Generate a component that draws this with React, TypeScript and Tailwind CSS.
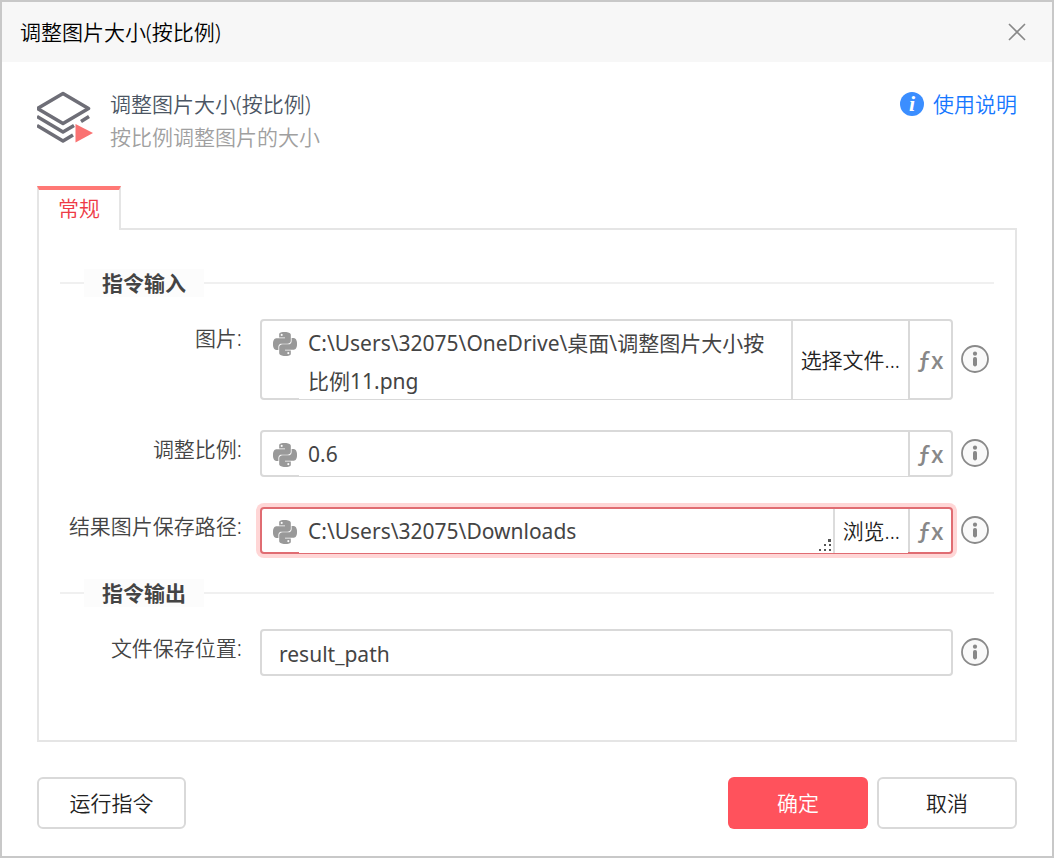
import React from "react";
import { SiPython } from "react-icons/si";

const inputFont = "text-[21px] leading-[38px] font-normal text-[#444]";

function LayersIcon() {
  return (
    <svg className="h-14 w-15 shrink-0" viewBox="0 0 60 56" fill="none" aria-hidden="true">
      <g stroke="#6e6e77" strokeWidth="3.6" strokeLinejoin="round">
        <path d="M26 5.5 L51.5 20.5 L26 35.5 L0.5 20.5 Z" />
        <path d="M0 28.5 L26 44 L37 37.5 M44 33.5 L52 28.5" />
        <path d="M0 37.5 L26 53 L36 47" />
      </g>
      <path d="M38.5 36 L56 45 L38.5 54.5 Z" fill="#fa7272" />
    </svg>
  );
}

function InfoIcon() {
  return (
    <svg className="h-7 w-7" viewBox="0 0 28 28" aria-hidden="true">
      <circle cx="14" cy="14" r="13" fill="#f9f9f9" stroke="#8a8a8a" strokeWidth="1.8" />
      <circle cx="14" cy="8.7" r="2.1" fill="#888" />
      <rect x="12" y="12" width="4" height="9.4" rx="1.8" fill="#888" />
    </svg>
  );
}

function ResizeGrip() {
  return (
    <svg className="absolute right-0.5 bottom-px h-3.5 w-3" viewBox="0 0 12 14" fill="#555" aria-hidden="true">
      <path d="M9 1h3v3H9zM5 6h2v2H5zM10 6h2v2h-2zM0 11h2v2H0zM5 11h2v2H5zM10 11h2v2h-2z" />
    </svg>
  );
}

function Legend({ children }: { children: React.ReactNode }) {
  return (
    <div className="flex h-7 items-center">
      <span className="h-0.5 w-6 bg-[#f0f0f0]" />
      <h2 className="bg-[#fcfcfc] px-[18px] text-[21px] leading-7 font-bold text-[#444]">{children}</h2>
      <span className="h-0.5 flex-1 bg-[#f0f0f0]" />
    </div>
  );
}

function Row({ id, label, children }: { id: string; label: string; children: React.ReactNode }) {
  return (
    <div className="flex items-start">
      <label htmlFor={id} className="w-[182px] shrink-0 text-right leading-[38px] text-[#444]">
        {label}
      </label>
      <div className="ml-[18px] flex min-w-0 flex-1 items-center gap-2">
        {children}
        <button type="button" aria-label={label + "说明"} className="h-[30px] shrink-0 pb-0.5">
          <InfoIcon />
        </button>
      </div>
    </div>
  );
}

type FieldProps = {
  id: string;
  value: string;
  rows?: number;
  action?: string;
  active?: boolean;
};

function ExpressionField({ id, value, rows = 1, action, active }: FieldProps) {
  return (
    <div
      className={
        "flex min-w-0 flex-1 rounded border-2 bg-white " +
        (active ? "border-[#e06c72] ring-4 ring-[#ffd6d6]" : "border-[#d9d9d9]")
      }
    >
      <span className="w-[37px] shrink-0 pt-[11px] pl-[11px]">
        <SiPython className="h-6 w-6 text-[#999]" />
      </span>
      <div className="relative -mb-px flex min-w-0 flex-1 bg-white">
        <textarea
          id={id}
          defaultValue={value}
          className={
            "block w-full resize-none overflow-hidden pt-[3px] pr-2 pl-[9px] outline-none " +
            (rows > 1 ? "h-[78px] " : "h-11 ") +
            inputFont
          }
        />
        {active && <ResizeGrip />}
      </div>
      {action && (
        <button type="button" className="-mb-px shrink-0 border-l-2 border-[#dcdcdc] bg-white px-2 text-[#222]">
          {action}
        </button>
      )}
      <button
        type="button"
        aria-label="表达式"
        className="w-[43px] shrink-0 border-l-2 border-[#d9d9d9] pb-0.5 font-['Noto_Sans_CJK_SC',sans-serif] text-2xl font-medium text-[#888]"
      >
        ƒx
      </button>
    </div>
  );
}

export default function App() {
  return (
    <main className="flex min-h-screen flex-col border-2 border-[#c8c8c8] bg-white font-['Noto_Sans','Noto_Sans_CJK_SC',sans-serif] text-[21px] leading-8 font-[350]">
      <header className="flex h-15 items-center justify-between bg-[#f7f7f7] pr-[26px] pl-[18px]">
        <h1 className="text-black">调整图片大小(按比例)</h1>
        <button type="button" aria-label="关闭">
          <svg className="h-[18px] w-[18px]" viewBox="0 0 18 18" stroke="#888" strokeWidth="1.6" aria-hidden="true">
            <path d="M1 1 L17 17 M17 1 L1 17" />
          </svg>
        </button>
      </header>

      <div className="flex flex-1 flex-col px-[35px] pt-[26px] pb-[27px]">
        <section className="flex items-start">
          <LayersIcon />
          <div className="ml-[13px] flex-1">
            <p className="leading-[33px] text-[#4b5563]">调整图片大小(按比例)</p>
            <p className="leading-[33px] text-[#a0a0a0]">按比例调整图片的大小</p>
          </div>
          <a href="#help" className="flex items-center gap-[9px] leading-8 text-[#1677ff]">
            <span className="flex h-6 w-6 items-center justify-center rounded-full bg-[#3b8eff] font-['Liberation_Serif',serif] text-[22px] leading-6 font-bold text-white italic">
              i
            </span>
            使用说明
          </a>
        </section>

        <div role="tablist" className="relative z-10 mt-8 -mb-0.5 flex">
          <button
            type="button"
            role="tab"
            aria-selected="true"
            className="h-11 border-x-2 border-t-4 border-x-[#e5e5e5] border-t-[#ff7875] bg-white px-[19px] pb-1 leading-9 text-[#ee3b46]"
          >
            常规
          </button>
        </div>

        <div role="tabpanel" className="flex-1 border-2 border-[#e5e5e5] px-[21px] pt-[39px]">
          <Legend>指令输入</Legend>
          <div className="mt-[22px] flex flex-col gap-[30px] pr-[5px]">
            <Row id="image" label="图片:">
              <ExpressionField
                id="image"
                rows={2}
                value={"C:\\Users\\32075\\OneDrive\\桌面\\调整图片大小按比例11.png"}
                action="选择文件..."
              />
            </Row>
            <Row id="ratio" label="调整比例:">
              <ExpressionField id="ratio" value="0.6" />
            </Row>
            <Row id="output" label="结果图片保存路径:">
              <ExpressionField id="output" value={"C:\\Users\\32075\\Downloads"} action="浏览..." active />
            </Row>
          </div>
          <div className="mt-[25px]">
            <Legend>指令输出</Legend>
          </div>
          <div className="mt-[22px] pr-[5px]">
            <Row id="result" label="文件保存位置:">
              <input
                id="result"
                defaultValue="result_path"
                className={"h-[47px] min-w-0 flex-1 rounded border-2 border-[#d9d9d9] pt-0.5 pl-[17px] outline-none " + inputFont}
              />
            </Row>
          </div>
        </div>

        <footer className="mt-[35px] flex gap-[9px]">
          <button type="button" className="h-[52px] w-[149px] rounded-md border-2 border-[#d9d9d9] text-[#222]">
            运行指令
          </button>
          <button type="button" className="ml-auto h-[52px] w-[140px] rounded-md bg-[#ff525c] text-white">
            确定
          </button>
          <button type="button" className="h-[52px] w-[140px] rounded-md border-2 border-[#d9d9d9] text-[#222]">
            取消
          </button>
        </footer>
      </div>
    </main>
  );
}
